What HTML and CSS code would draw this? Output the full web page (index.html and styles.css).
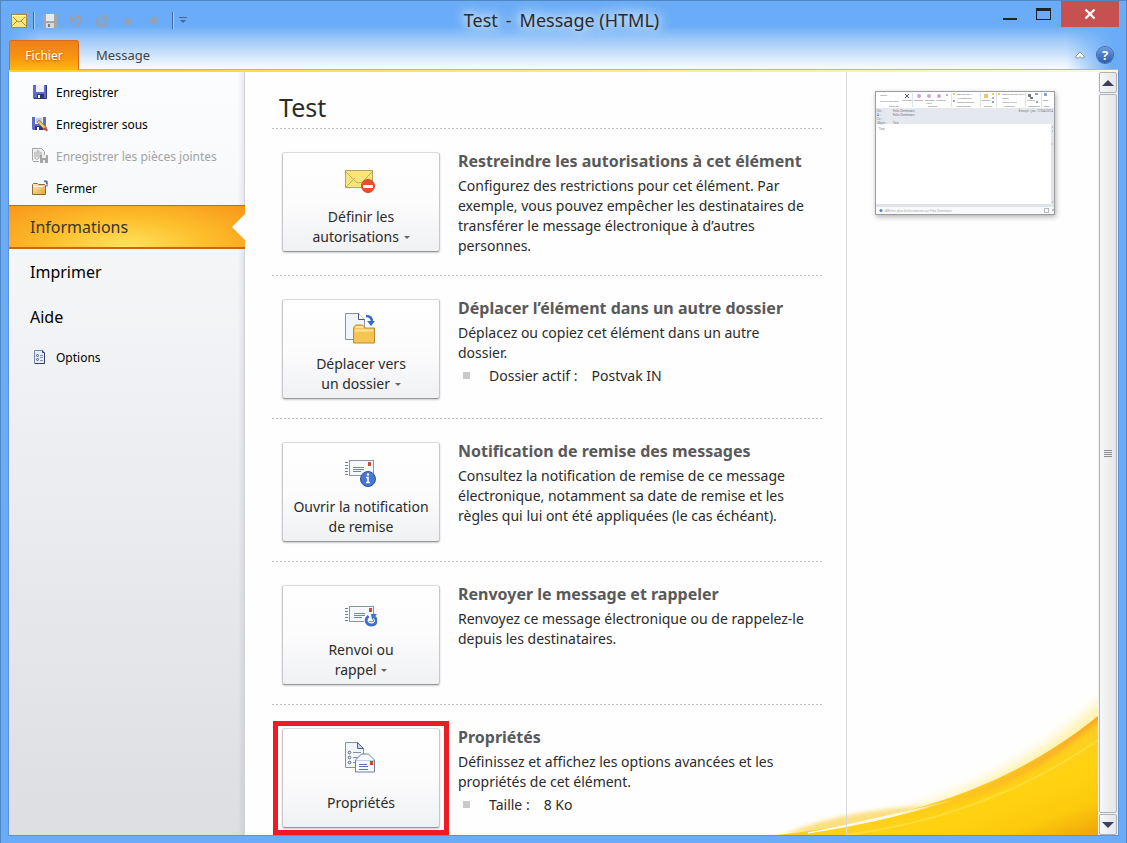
FILE: index.html
```html
<!DOCTYPE html>
<html lang="fr">
<head>
    <meta charset="UTF-8">
    <meta name="viewport" content="width=device-width, initial-scale=1.0">
    <title>Test - Message (HTML)</title>
    <link rel="stylesheet" href="styles.css">
</head>
<body>
    <div class="window">
        <header class="header">
            <div class="titlebar">
                <div class="quick-access">
                    <svg class="app-icon" width="16" height="14" viewBox="0 0 16 14">
                        <rect x="0.5" y="0.5" width="15" height="13" fill="#fbe77c" stroke="#a58a3a"/>
                        <path d="M1 12l5-5M15 12l-5-5M2 3l4 4q2 2 4 0l4-4" fill="none" stroke="#a58f45"/>
                        <path d="M1 1.5h14" stroke="#fff8c8"/>
                    </svg>
                    <span class="divider"></span>
                    <button class="tool" aria-label="Enregistrer">
                        <svg width="14" height="14" viewBox="0 0 14 14">
                            <path d="M0 0h14v14H1L0 13z" fill="#a3a6ad"/>
                            <rect x="3" y="0" width="8" height="7" fill="#e9e9ec"/>
                            <rect x="3" y="9" width="8" height="5" fill="#d8d8dc"/>
                            <rect x="5" y="10" width="2" height="3" fill="#777b84"/>
                        </svg>
                    </button>
                    <button class="tool" aria-label="Annuler">
                        <svg width="14" height="14" viewBox="0 0 14 14">
                            <path d="M4 6c3-5 8-4 7.500 0c0 3-2 4.500-4.500 6" fill="none" stroke="#9a9fab" stroke-width="2.400"/>
                            <path d="M1 2v6h6z" fill="#9a9fab"/>
                        </svg>
                    </button>
                    <button class="tool" aria-label="Répéter">
                        <svg width="14" height="14" viewBox="0 0 14 14">
                            <path d="M4 3.500C0 8 3 12 7 12s6-5 3-8" fill="none" stroke="#9a9fab" stroke-width="2.400"/>
                            <path d="M7 1h6L8 7z" fill="#9a9fab"/>
                        </svg>
                    </button>
                    <button class="tool" aria-label="Élément précédent">
                        <svg width="12" height="10" viewBox="0 0 12 10"><path d="M6 1l5 5H8.500v3h-5V6H1z" fill="#9a9fab"/></svg>
                    </button>
                    <button class="tool" aria-label="Élément suivant">
                        <svg width="12" height="10" viewBox="0 0 12 10"><path d="M6 9l5-5H8.500V1h-5v3H1z" fill="#9a9fab"/></svg>
                    </button>
                    <span class="divider"></span>
                    <button class="tool small" aria-label="Personnaliser">
                        <svg width="8" height="7" viewBox="0 0 8 7"><path d="M0 .5h8" stroke="#41669a"/><path d="M1 3h6L4 6z" fill="#41669a"/></svg>
                    </button>
                </div>
                <h1 class="window-title"><span>Test</span><span>-</span><span>Message (HTML)</span></h1>
                <div class="window-buttons">
                    <button class="minimize" aria-label="Réduire"></button>
                    <button class="maximize" aria-label="Agrandir"></button>
                    <button class="close" aria-label="Fermer la fenêtre">
                        <svg width="12" height="10" viewBox="0 0 12 10"><path d="M1.500.5l9 9M10.500.5l-9 9" stroke="#fff" stroke-width="2.200"/></svg>
                    </button>
                </div>
            </div>
            <nav class="tabs">
                <button class="tab tab-file">Fichier</button>
                <button class="tab">Message</button>
                <div class="tabs-right">
                    <button class="tool small" aria-label="Réduire le ruban">
                        <svg width="10" height="8" viewBox="0 0 10 8"><path d="M5 1L1 5v2h2.500L5 5.500 6.500 7H9V5z" fill="#fff" stroke="#8a8f98"/></svg>
                    </button>
                    <button class="help" aria-label="Aide sur Outlook">?</button>
                </div>
            </nav>
        </header>

        <div class="backstage">
            <aside class="sidebar">
                <button class="item">
                    <svg width="16" height="16" viewBox="0 0 16 16">
                        <path d="M1 1h14v14H2l-1-1z" fill="#5f6acb"/>
                        <path d="M14.500 1v13.500H2" fill="none" stroke="#2d347e"/>
                        <rect x="4" y="1" width="8" height="7" fill="#eef1fb"/>
                        <rect x="5" y="10" width="7" height="5" fill="#30366c"/>
                        <rect x="6" y="11" width="2" height="3" fill="#fff"/>
                    </svg>
                    Enregistrer
                </button>
                <button class="item">
                    <svg width="16" height="16" viewBox="0 0 16 16">
                        <path d="M0 1h14v13H1l-1-1z" fill="#5f6acb"/>
                        <rect x="3" y="1" width="8" height="7" fill="#eef1fb"/>
                        <path d="M4 3h6M4 5h6" stroke="#9aa3bb"/>
                        <rect x="3" y="10" width="8" height="4" fill="#30366c"/>
                        <rect x="5" y="11" width="2" height="3" fill="#fff"/>
                        <path d="M6 5l8 8" stroke="#8d7443" stroke-width="3.500"/>
                        <path d="M6.500 5.500l7 7" stroke="#f0ce6c" stroke-width="2.200"/>
                        <path d="M13 11l3 3-1.500 1.500-3-3z" fill="#c5483a"/>
                    </svg>
                    Enregistrer sous
                </button>
                <button class="item" disabled>
                    <svg width="16" height="16" viewBox="0 0 16 16" fill="none" stroke="#a5a5a5">
                        <path d="M.5 12.500V.5h9l3 3v5" fill="#eee"/>
                        <path d="M3 4v5c0 3 4 3 4 0V4c0-2-2-2-2 0v5M9 4v4"/>
                        <rect x="8" y="7" width="8" height="8" fill="#a5a5a5" stroke="none"/>
                        <rect x="10" y="7" width="4" height="3" fill="#eee" stroke="none"/>
                        <rect x="11" y="12" width="2" height="3" fill="#eee" stroke="none"/>
                        <path d="M1 13.500h6"/>
                    </svg>
                    Enregistrer les pièces jointes
                </button>
                <button class="item">
                    <svg width="16" height="16" viewBox="0 0 16 16">
                        <defs><linearGradient id="folder" x2="1" y2="1"><stop stop-color="#fff1b5"/><stop offset="1" stop-color="#dda236"/></linearGradient></defs>
                        <path d="M.5 14.500v-10l1-1h4l1 1h6l1 1v9z" fill="url(#folder)" stroke="#8c6b2c"/>
                        <path d="M2 6.500h9l1-1" stroke="#fffbe0" fill="none"/>
                        <path d="M12 1h3v3M12.500 1.500c2 0 3 2 2.500 5" fill="none" stroke="#38517e"/>
                    </svg>
                    Fermer
                </button>
                <button class="item large active">Informations</button>
                <button class="item large">Imprimer</button>
                <button class="item large">Aide</button>
                <button class="item options">
                    <svg width="16" height="16" viewBox="0 0 16 16">
                        <path d="M2.500 1.500h8l2 2v11h-10z" fill="#e6edf8" stroke="#7588a8"/>
                        <path d="M12.500 4v10.500H3M10.500 1.500v2h2" stroke="#33445f" fill="none"/>
                        <path d="M8 6.500h3M8 8.500h3M8 11.500h3" stroke="#8393ae"/>
                        <circle cx="5.500" cy="6.500" r="1" fill="none" stroke="#445672"/>
                        <circle cx="5.500" cy="10.500" r="1" fill="none" stroke="#445672"/>
                    </svg>
                    Options
                </button>
            </aside>

            <main class="main">
                <svg class="wave" width="330" height="170" viewBox="0 0 330 170">
                    <defs>
                        <linearGradient id="gold" x1="0" y1="0" x2="1" y2="1">
                            <stop offset="0.4" stop-color="#fbcb33"/>
                            <stop offset="0.7" stop-color="#ffd210"/>
                            <stop offset="0.85" stop-color="#fccb0c"/>
                            <stop offset="1" stop-color="#f0a30a"/>
                        </linearGradient>
                        <linearGradient id="streak">
                            <stop stop-color="#fff" stop-opacity="0.9"/>
                            <stop offset="0.6" stop-color="#fff" stop-opacity="0.8"/>
                            <stop offset="1" stop-color="#fff" stop-opacity="0"/>
                        </linearGradient>
                        <linearGradient id="rim">
                            <stop stop-color="#f9b22b" stop-opacity="0"/>
                            <stop offset="1" stop-color="#f9ab25"/>
                        </linearGradient>
                        <filter id="soft" x="-10%" y="-20%" width="120%" height="140%"><feGaussianBlur stdDeviation="6"/></filter>
                        <filter id="edge" x="-10%" y="-20%" width="120%" height="140%"><feGaussianBlur stdDeviation="2"/></filter>
                        <clipPath id="body"><path d="M8 170C150 154 250 116 330 51V170z"/></clipPath>
                    </defs>
                    <path d="M10 178C150 152 265 108 350 18V60C270 130 170 170 10 178z" fill="#fff2ac" filter="url(#soft)"/>
                    <path d="M15 170C50 155 100 142 175 141C130 158 90 166 15 170z" fill="#fbdf80" filter="url(#edge)"/>
                    <path d="M8 170C150 154 250 116 330 51V170z" fill="url(#gold)"/>
                    <g clip-path="url(#body)">
                        <path d="M130 151C235 128 285 90 334 48" fill="none" stroke="url(#rim)" stroke-width="9" filter="url(#edge)"/>
                    </g>
                    <path d="M40 168Q110 158 185 135Q110 154 40 168z" fill="url(#streak)" stroke="url(#streak)" stroke-width="1"/>
                    <path d="M78 170C170 158 255 127 330 75" fill="none" stroke="#ffdc38" stroke-width="2"/>
                </svg>

                <div class="content">
                    <h2 class="page-title">Test</h2>

                    <section class="section">
                        <button class="action">
                            <svg width="32" height="32" viewBox="0 0 32 32">
                                <rect x="0.500" y="4.500" width="27" height="17" fill="#fbe57a" stroke="#b8a35a"/>
                                <path d="M1 21l9-9M27 21l-8-8M1 6l10 10q3 2 6 0L27 6" fill="none" stroke="#c4ad5a"/>
                                <circle cx="23" cy="20" r="6.500" fill="#e8502b" stroke="#d2482a"/>
                                <rect x="18" y="19" width="10" height="3" fill="#fff"/>
                            </svg>
                            <span class="label"><span>Définir les<br>autorisations <i class="arrow"></i></span></span>
                        </button>
                        <div class="text">
                            <h3>Restreindre les autorisations à cet élément</h3>
                            <p>Configurez des restrictions pour cet élément. Par exemple, vous pouvez empêcher les destinataires de transférer le message électronique à d’autres personnes.</p>
                        </div>
                    </section>

                    <section class="section">
                        <button class="action">
                            <svg width="32" height="32" viewBox="0 0 32 32">
                                <path d="M.5.500h13l6 6v20H.5z" fill="#f2f6fc" stroke="#8292ad"/>
                                <path d="M13.500.5v6h6" fill="#fff" stroke="#42587e"/>
                                <path d="M21 3q6 0 6 6" fill="none" stroke="#3a6ad0" stroke-width="2.500"/>
                                <path d="M22 8h8l-4 5z" fill="#3a6ad0"/>
                                <path d="M8.500 15l2-3h7l2 3h10v15h-21z" fill="#f5c452" stroke="#b98a35"/>
                                <path d="M10 17.500h18M10.500 14h8" stroke="#ffe59c" stroke-width="2"/>
                            </svg>
                            <span class="label"><span>Déplacer vers<br>un dossier <i class="arrow"></i></span></span>
                        </button>
                        <div class="text">
                            <h3>Déplacer l’élément dans un autre dossier</h3>
                            <p>Déplacez ou copiez cet élément dans un autre dossier.</p>
                            <ul><li><span>Dossier actif :</span><span>Postvak IN</span></li></ul>
                        </div>
                    </section>

                    <section class="section">
                        <button class="action">
                            <svg width="32" height="32" viewBox="0 0 32 32">
                                <path d="M0 6.500h3M0 9.500h3M0 12.500h3M0 15.500h3M0 18.500h3" stroke="#6f7f98"/>
                                <rect x="4.500" y="4.500" width="24" height="15" fill="#f5f8fd" stroke="#8995a9"/>
                                <path d="M8 11.500h11M8 13.500h11M8 15.500h8" stroke="#7486a5"/>
                                <rect x="23" y="6" width="3" height="4" fill="#d1492d"/>
                                <circle cx="23" cy="23" r="7.500" fill="#4777d2" stroke="#2c52a2"/>
                                <path d="M21 21.500h2v5M21 26.500h4" fill="none" stroke="#fff" stroke-width="1.600"/>
                                <circle cx="23" cy="18.500" r="1.200" fill="#fff"/>
                            </svg>
                            <span class="label"><span>Ouvrir la notification<br>de remise</span></span>
                        </button>
                        <div class="text">
                            <h3>Notification de remise des messages</h3>
                            <p>Consultez la notification de remise de ce message électronique, notamment sa date de remise et les règles qui lui ont été appliquées (le cas échéant).</p>
                        </div>
                    </section>

                    <section class="section">
                        <button class="action">
                            <svg width="32" height="32" viewBox="0 0 32 32">
                                <path d="M0 9.500h3M0 12.500h3M0 15.500h3M0 18.500h3M0 21.500h3" stroke="#6f7f98"/>
                                <rect x="4.500" y="7.500" width="24" height="15" fill="#f5f8fd" stroke="#8995a9"/>
                                <path d="M9 14.500h11M9 16.500h11M9 18.500h8" stroke="#7486a5"/>
                                <rect x="24" y="9" width="3" height="4" fill="#d1492d"/>
                                <path d="M23.500 17c-4.500 4-2 9 3 9s6-5 3-8" fill="none" stroke="#fff" stroke-width="4.500"/>
                                <path d="M23.500 17c-4.500 4-2 9 3 9s6-5 3-8" fill="none" stroke="#3f6fce" stroke-width="2.800"/>
                                <path d="M26 15h6l-5 6z" fill="#3f6fce"/>
                            </svg>
                            <span class="label"><span>Renvoi ou<br>rappel <i class="arrow"></i></span></span>
                        </button>
                        <div class="text">
                            <h3>Renvoyer le message et rappeler</h3>
                            <p>Renvoyez ce message électronique ou de rappelez-le depuis les destinataires.</p>
                        </div>
                    </section>

                    <section class="section">
                        <button class="action highlighted">
                            <svg width="32" height="32" viewBox="0 0 32 32">
                                <path d="M.5.500h12l6 6v19H.5z" fill="#f2f6fc" stroke="#8292ad"/>
                                <path d="M12.500.5v6h6z" fill="#c7d6ee" stroke="#52658a"/>
                                <path d="M8 10.500h8M8 15.500h5M8 20.500h3" stroke="#8292ad"/>
                                <g fill="none" stroke="#51617c"><circle cx="4.500" cy="10.500" r="1.300"/><circle cx="4.500" cy="15.500" r="1.300"/><circle cx="4.500" cy="20.500" r="1.300"/></g>
                                <path d="M10.500 30V18l6-6h7l6 6v12z" fill="#f7faff" stroke="#6f809c"/>
                                <path d="M11 18.500h18" stroke="#c5d0e2"/>
                                <path d="M14 22.500h8M14 24.500h9M14 27.500h9" stroke="#5c76a8"/>
                                <rect x="25" y="19" width="3" height="4" fill="#d9441f"/>
                            </svg>
                            <span class="label"><span>Propriétés</span></span>
                        </button>
                        <div class="text">
                            <h3>Propriétés</h3>
                            <p>Définissez et affichez les options avancées et les propriétés de cet élément.</p>
                            <ul><li><span>Taille :</span><span>8 Ko</span></li></ul>
                        </div>
                    </section>
                </div>

                <div class="preview">
                    <svg class="thumbnail" width="180" height="124" viewBox="0 0 180 124">
                        <rect width="180" height="124" fill="#fff"/>
                        <rect y="17" width="180" height="16" fill="#e5e9ef"/>
                        <path d="M37.500 2v14M76.500 2v14M105.500 2v14M121.500 2v14M150.500 2v14M166.500 2v14" stroke="#e0e3e8"/>
                        <path d="M30 3l4 4M34 3l-4 4" stroke="#555"/>
                        <g fill="#c9a8d0"><circle cx="44" cy="5" r="2"/><circle cx="54" cy="5" r="2"/><circle cx="64" cy="5" r="2"/><path d="M71 3h2v2h-2zM117 6h2v2h-2z"/></g>
                        <g fill="#f2c56a"><path d="M109 3h4v4h-4zM117 2h2v2h-2zM123 2h2v2h-2zM78 2h2v2h-2z"/></g>
                        <g fill="#8da2c8"><path d="M78 9h2v2h-2zM117 10h2v2h-2zM160 2h3v2h-3zM161 10h2v2h-2zM169 2h3v3h-3z"/></g>
                        <path d="M153 3h3v3h2v2h-3V6h-2z" fill="#777"/>
                        <g class="thumb-ribbon">
                            <text x="5" y="5">Ignorer</text><text x="5" y="11">Courrier indésirable</text>
                            <text x="27" y="10">Supprimer</text><text x="39" y="10">Répondre</text><text x="50" y="10">Répondre</text><text x="51" y="13">à tous</text><text x="61" y="10">Transférer</text>
                            <text x="82" y="4">Déplacer vers : ?</text><text x="82" y="8">Au responsable</text><text x="82" y="12">Message d’équipe</text>
                            <text x="107" y="10">Déplacer</text><text x="127" y="4">Marquer comme non lu</text><text x="127" y="8">Classer</text><text x="127" y="12">Assurer un suivi</text>
                            <text x="152" y="10">Traduire</text><text x="168" y="10">Zoom</text>
                            <text x="14" y="16">Supprimer</text><text x="53" y="16">Répondre</text><text x="81" y="16">Actions rapides</text><text x="109" y="16">Déplacer</text><text x="129" y="16">Indicateurs</text><text x="153" y="16">Modification</text><text x="169" y="16">Zoom</text>
                        </g>
                        <g class="thumb-text">
                            <text x="2" y="21">De :</text><text x="18" y="21">Felix Demmans</text><text x="2" y="25">À :</text><text x="18" y="25">Felix Demmans</text><text x="2" y="29">Cc :</text><text x="2" y="33">Objet :</text><text x="18" y="33">Test</text>
                            <text x="178" y="21" text-anchor="end">Envoyé : jeu. 17/04/2014</text><text x="4" y="39">Test</text>
                            <text x="10" y="121">Afficher plus d’informations sur Felix Demmans.</text>
                        </g>
                        <rect x="176" y="33" width="3" height="81" fill="#e1e5ea"/>
                        <path d="M177 36h1M177 40h1M177 53h1M177 111h1" stroke="#8d97a8"/>
                        <rect y="113" width="180" height="3" fill="#dfe4ea"/>
                        <rect y="116" width="180" height="8" fill="#f0f2f5" opacity="0.400"/>
                        <circle cx="6" cy="119.500" r="1.500" fill="#557fd0"/>
                        <rect x="169.500" y="117.500" width="4" height="4" fill="none" stroke="#bbb"/>
                        <path d="M177 119h2" stroke="#777"/>
                        <rect x="0.500" y="0.500" width="179" height="123" fill="none" stroke="#9a9c9f"/>
                    </svg>
                </div>

                <div class="scrollbar">
                    <button class="scroll-arrow" aria-label="Défiler vers le haut"><svg width="12" height="6" viewBox="0 0 12 6"><path d="M0 6l6-6 6 6z" fill="#39415f"/></svg></button>
                    <div class="thumb"><i></i><i></i><i></i><i></i></div>
                    <button class="scroll-arrow" aria-label="Défiler vers le bas"><svg width="12" height="6" viewBox="0 0 12 6"><path d="M0 0l6 6 6-6z" fill="#39415f"/></svg></button>
                </div>
            </main>
        </div>
    </div>
</body>
</html>
```
FILE: styles.css
```css
* {
    box-sizing: border-box;
}
body {
    margin: 0;
    font-family: "Noto Sans", "Open Sans", sans-serif;
    font-size: 14px;
    color: #2b2b2b;
}
button {
    font-family: inherit;
    color: inherit;
    border: none;
    background: none;
    padding: 0;
    margin: 0;
}
svg {
    display: block;
    flex: none;
}
h1, h2, h3, p, ul {
    margin: 0;
    padding: 0;
}
.window {
    display: flex;
    flex-direction: column;
    min-height: 100vh;
    padding-bottom: 7px;
    border: 1px solid #4f86c1;
    border-bottom: none;
    background-color: #6aacf7;
}

/* title bar and tabs */
.header {
    background:
        linear-gradient(to right, #6aacf7 8px, rgba(106, 172, 247, 0) 40px),
        linear-gradient(to left, #6aacf7 14px, rgba(106, 172, 247, 0) 60px),
        linear-gradient(#6aacf7 25px, #9cc8f9 38px, #f5f9ff 66px);
}
.titlebar {
    display: grid;
    grid-template-columns: 1fr auto 1fr;
    height: 39px;
}
.quick-access {
    display: flex;
    align-items: center;
    padding-left: 10px;
}
.divider {
    width: 2px;
    height: 17px;
    margin: 0 7px 0 6px;
    border-left: 1px solid #41669a;
    background-color: #a8cdf8;
}
.tool {
    display: flex;
    justify-content: center;
    width: 16px;
    margin-right: 10px;
}
.tool.small {
    width: 10px;
    margin: 0;
}
.tool + .divider {
    margin: 0 4px 0 0;
}
.window-title {
    display: flex;
    gap: 8px;
    padding-right: 4px;
    font-size: 18px;
    font-weight: normal;
    line-height: 38px;
}
.window-title span {
    text-shadow: 0 0 6px #b9d8fb, 0 0 10px #b9d8fb, 0 0 12px #b9d8fb, 0 0 14px #b9d8fb, 0 0 16px #b9d8fb, 0 0 20px #b9d8fb;
}
.window-buttons {
    display: flex;
    justify-content: flex-end;
    align-items: flex-start;
    padding-right: 7px;
}
.minimize {
    width: 14px;
    height: 2px;
    margin: 17px 19px 0 0;
    background-color: #222;
}
.maximize {
    width: 15px;
    height: 12px;
    margin: 7px 10px 0 0;
    border: 1px solid #222;
    border-top-width: 3px;
}
.close {
    display: flex;
    justify-content: center;
    align-items: center;
    width: 58px;
    height: 26px;
    background-color: #c75050;
}
.tabs {
    display: flex;
    align-items: flex-end;
    height: 32px;
    margin: 0 8px;
    border-bottom: 2px solid;
    border-image: linear-gradient(to right, #ffd21f, #ffe680 45%, #fff8dc) 1;
    box-shadow: inset 0 -1px #aab7c9;
}
.tab {
    height: 30px;
    padding: 0 17px;
    font-size: 13px;
    color: #444;
}
.tab-file {
    width: 70px;
    padding: 0;
    border: 1px solid #d9691a;
    border-bottom: none;
    border-radius: 3px 3px 0 0;
    background: linear-gradient(#ef7f18, #f8970f 60%, #ffb911);
    font-size: 12px;
    color: #fff;
    text-shadow: 0 1px 2px #b3540a;
}
.tabs-right {
    display: flex;
    align-items: center;
    gap: 12px;
    height: 30px;
    margin-left: auto;
    padding-right: 5px;
}
.help {
    width: 16px;
    height: 16px;
    border-radius: 50%;
    background: linear-gradient(#6d9be0, #2b5cae);
    box-shadow: 0 0 0 1px #3d68ad;
    font-size: 13px;
    font-weight: bold;
    line-height: 16px;
    color: #fff;
}

/* backstage menu */
.backstage {
    flex: 1;
    display: flex;
    margin: 0 7px;
    border: solid #5b93d6;
    border-width: 0 1px 1px;
}
.sidebar {
    position: relative;
    z-index: 1;
    flex: none;
    width: 236px;
    padding-top: 4px;
    border-right: 1px solid #d3d5d8;
    background:
        linear-gradient(to left, rgba(120, 125, 130, 0.15), transparent 6px),
        linear-gradient(#fcfdfe, #eceef1 50%, #dcdee2);
}
.item {
    display: flex;
    align-items: center;
    gap: 8px;
    width: 100%;
    height: 32px;
    padding-left: 23px;
    font-size: 12px;
    color: #000;
}
.item:disabled {
    color: #a3a3a3;
}
.item.large {
    height: 45px;
    padding-left: 21px;
    font-size: 16px;
}
.item.large.active {
    position: relative;
    width: 236px;
    height: 44px;
    margin-top: 1px;
    border: solid #c8690f;
    border-width: 1px 0 2px;
    background: radial-gradient(ellipse at 50% 100%, #ffe35c, #fdbd2a 50%, #f8961a);
    color: #3b3626;
}
.item.options {
    margin-top: 2px;
}
.active::after {
    content: "";
    position: absolute;
    right: 0;
    top: 8px;
    border: solid transparent;
    border-width: 13px 13px 13px 0;
    border-right-color: #fefefe;
}

/* main area */
.main {
    position: relative;
    flex: 1;
    display: grid;
    grid-template-columns: 601fr 252fr 20px;
    background-color: #fefefe;
}
.wave {
    position: absolute;
    right: 20px;
    bottom: 0;
}
.content {
    position: relative;
    padding: 16px 24px 0 27px;
}
.page-title {
    padding: 0 0 2px 7px;
    font-size: 25px;
    font-weight: normal;
    line-height: 38px;
}
.section {
    display: flex;
    gap: 18px;
    padding: 24px 12px 19px 10px;
    background: repeating-linear-gradient(to right, #bcbcbc 0 2px, transparent 2px 4px) top / 100% 1px no-repeat;
}
.section:last-child {
    padding-bottom: 7px;
}
.action {
    position: relative;
    flex: none;
    display: flex;
    flex-direction: column;
    align-items: center;
    width: 158px;
    height: 100px;
    padding-top: 13px;
    border: 1px solid #c6c8cb;
    border-color: #dadbdd #c6c8cb #96989b;
    border-radius: 3px;
    background: linear-gradient(#fff, #fcfcfd 50%, #f0f1f3);
    box-shadow: 0 1px 2px rgba(0, 0, 0, 0.2);
    font-size: 14px;
    line-height: 20px;
}
.label {
    display: grid;
    place-content: center;
    height: 40px;
    margin-top: 9px;
}
.highlighted::after {
    content: "";
    position: absolute;
    inset: -8px -10px;
    border: 5px solid #ed1c24;
}
.arrow {
    display: inline-block;
    margin-left: 1px;
    vertical-align: 3px;
    border: solid transparent;
    border-width: 3px 3px 0;
    border-top-color: #666;
}
.text {
    flex: 1;
}
.text h3 {
    margin-bottom: 6px;
    font-size: 16px;
    line-height: 18px;
    color: #595959;
}
.text p,
.text li {
    line-height: 20px;
}
.text ul {
    margin-top: 3px;
    list-style: none;
}
.text li {
    display: flex;
    gap: 14px;
}
.text li::before {
    content: "";
    width: 7px;
    height: 7px;
    margin: 6px 5px 0 5px;
    background-color: #c9c9c9;
}
.preview {
    position: relative;
    padding: 19px 0 0 28px;
    border-left: 1px solid #d7d8da;
}
.thumbnail {
    box-shadow: 1px 2px 5px rgba(0, 0, 0, 0.3);
}
.thumb-text {
    font-size: 3px;
    fill: #666;
}
.thumb-ribbon {
    font-size: 2px;
    fill: #555;
}

/* scrollbar */
.scrollbar {
    position: relative;
    display: flex;
    flex-direction: column;
    gap: 1px;
    padding: 0 1px;
    background-color: #f3f4f5;
}
.scroll-arrow,
.thumb {
    display: flex;
    justify-content: center;
    align-items: center;
    border: 1px solid #adb2b9;
    border-radius: 2px;
    background: linear-gradient(to right, #f7f7f8, #e6e6e8);
}
.scroll-arrow {
    height: 21px;
}
.thumb {
    flex: 1;
    flex-direction: column;
    gap: 1px;
}
.thumb i {
    width: 8px;
    height: 1px;
    background-color: #8a8f98;
}
```
